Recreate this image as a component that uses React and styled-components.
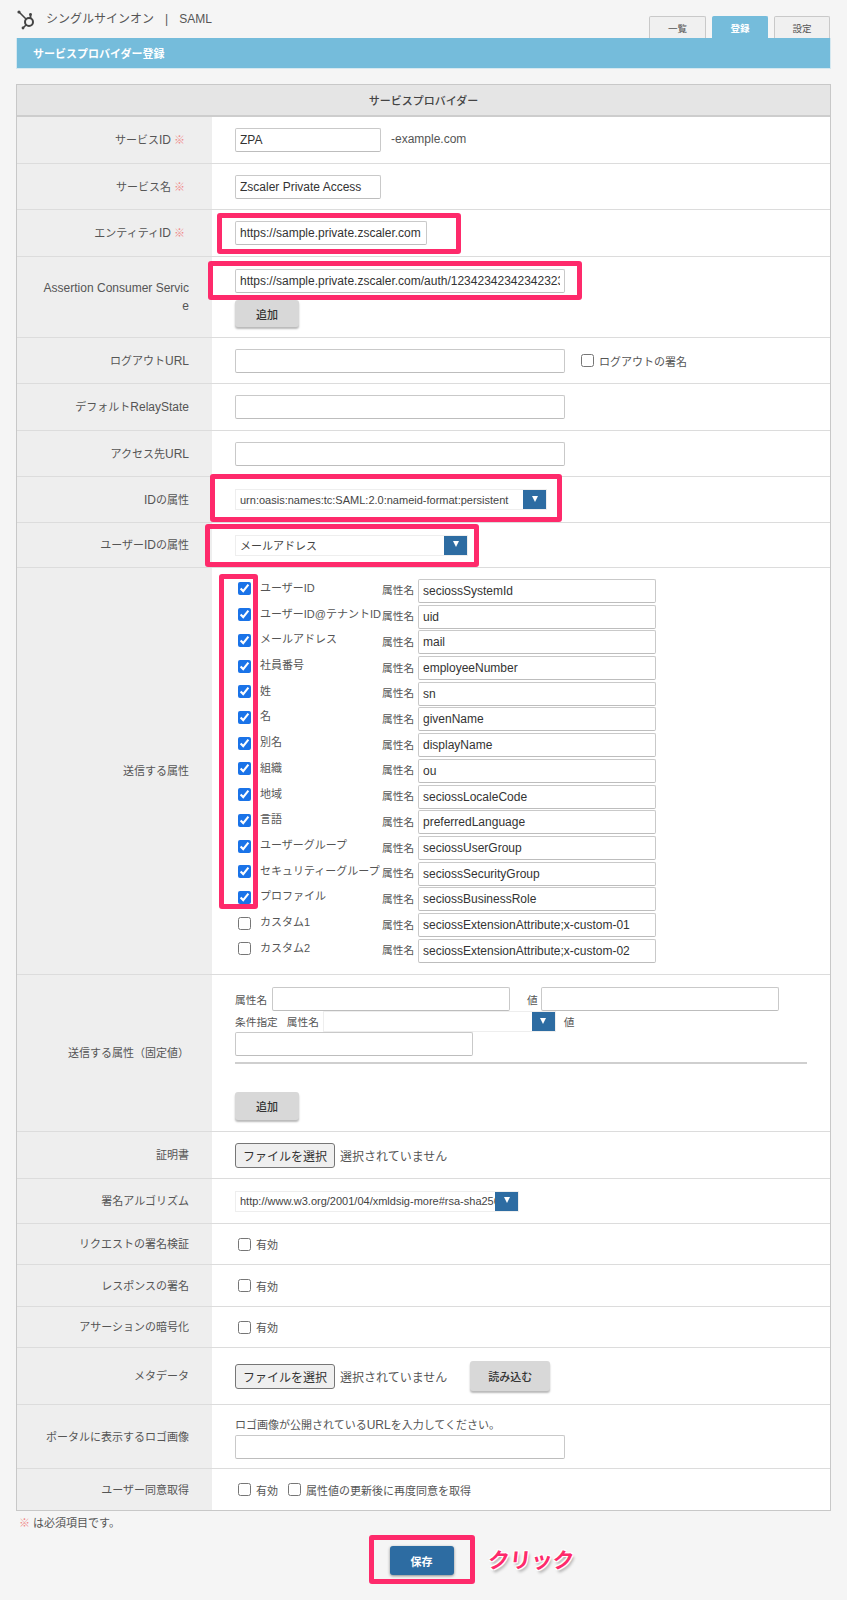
import React from 'react';
import styled, { createGlobalStyle } from 'styled-components';

const FONT = '"Liberation Sans", "Noto Sans CJK JP", sans-serif';

const Global = createGlobalStyle`
  html, body { margin: 0; padding: 0; background: #f5f5f5; }
  body { font-family: ${FONT}; color: #555; font-size: 11px; }
  * { box-sizing: border-box; }
`;

const Page = styled.div`
  position: relative;
  width: 847px;
  height: 1600px;
  padding: 0 16px;
  overflow: hidden;
`;
const TopBar = styled.header`
  height: 38px;
  display: flex;
  justify-content: space-between;
`;
const Title = styled.div`
  display: flex;
  align-items: center;
  height: 37px;
`;
const TitleText = styled.span`
  margin-left: 8px;
  font-size: 12px;
  color: #555;
  white-space: nowrap;
  position: relative;
  top: -1px;
`;
const TitleSep = styled.span`
  margin: 0 11px;
`;
const Tabs = styled.nav`
  display: flex;
  align-items: flex-end;
  gap: 6px;
  margin-right: 1px;
`;
const Tab = styled.div`
  width: ${p => p.$w}px;
  height: 22px;
  display: flex;
  align-items: center;
  justify-content: center;
  font-size: 9.5px;
  border-radius: 2px 2px 0 0;
  background: ${p => (p.$active ? '#75bcdb' : '#f0f0f0')};
  color: ${p => (p.$active ? '#fff' : '#555')};
  font-weight: ${p => (p.$active ? 700 : 400)};
  border: 1px solid ${p => (p.$active ? '#75bcdb' : '#c9c9c9')};
  border-bottom: none;
`;
const TitleBar = styled.div`
  height: 31px;
  background: #75bcdb;
  border: 1px solid #d5e8f0;
  border-top: none;
  color: #fff;
  font-weight: 700;
  font-size: 11px;
  display: flex;
  align-items: center;
  padding-left: 16px;
`;
const Table = styled.section`
  margin-top: 15px;
  border: 1px solid #c8c8c8;
  background: #fff;
`;
const TableHead = styled.div`
  height: 32px;
  background: #e5e5e5;
  border-bottom: 2px solid #cdcdcd;
  display: flex;
  align-items: center;
  justify-content: center;
  font-size: 11px;
  font-weight: 500;
  color: #444;
`;
const Row = styled.div`
  display: grid;
  grid-template-columns: 195px 1fr;
  height: ${p => p.$h}px;
  border-bottom: ${p => (p.$last ? 'none' : '1px solid #dcdcdc')};
`;
const Label = styled.div`
  background: #eee;
  display: flex;
  align-items: center;
  justify-content: flex-end;
  padding: 0 23px 0 22px;
  font-size: 11px;
  color: #555;
  text-align: right;
  word-break: break-all;
  line-height: 18px;
`;
const Latin = styled.span`
  font-size: 12px;
`;
const Req = styled.span`
  color: #f08a8a;
  margin: 0 4px 0 3px;
`;
const Cell = styled.div`
  padding-left: 23px;
  display: flex;
  align-items: center;
  min-width: 0;
`;
const StackCell = styled.div`
  padding: ${p => p.$top}px 0 0 23px;
  display: flex;
  flex-direction: column;
  align-items: flex-start;
`;
const Input = styled.input`
  width: ${p => p.$w || 330}px;
  height: 24px;
  border: 1px solid #c9c9c9;
  border-bottom-color: #bdbdbd;
  border-radius: 2px;
  background: #fff;
  padding: 0 4px;
  font-family: ${FONT};
  font-size: 12px;
  color: #333;
  outline: none;
  flex: none;
`;
const Suffix = styled.span`
  margin-left: 10px;
  font-size: 12px;
  color: #555;
  position: relative;
  top: -1px;
`;
const GrayButton = styled.button`
  width: ${p => p.$w || 64}px;
  height: ${p => p.$ht || 27}px;
  margin-top: ${p => p.$mt || 0}px;
  margin-left: ${p => p.$ml || 0}px;
  border: none;
  border-radius: 3px;
  background: #d8d8d8;
  box-shadow: 0 2px 2px rgba(0, 0, 0, 0.28);
  font-family: ${FONT};
  font-size: 11px;
  font-weight: 500;
  color: #333;
  padding: 0;
  flex: none;
`;
const Check = styled.input.attrs({ type: 'checkbox' })`
  width: 13px;
  height: 13px;
  margin: 0 0 0 ${p => p.$ml ?? 3}px;
  flex: none;
  accent-color: #1a73e8;
`;
const CheckText = styled.span`
  margin-left: 5px;
  font-size: 11px;
  color: #555;
  white-space: nowrap;
`;
const SelectBox = styled.div`
  width: ${p => p.$w}px;
  height: 21px;
  position: relative;
  display: flex;
  align-items: center;
  background: #fff;
  border: 1px solid #eeeeee;
  padding: 0 24px 0 4px;
  overflow: hidden;
  white-space: nowrap;
  font-size: 11px;
  color: #444;
  flex: none;
`;
const SelectArrow = styled.span`
  position: absolute;
  right: 0;
  top: 0;
  bottom: 0;
  width: 23px;
  background: #2d6ca2;
  display: flex;
  align-items: center;
  justify-content: center;
  &::after {
    content: '';
    border-left: 3.75px solid transparent;
    border-right: 3.75px solid transparent;
    border-top: 6.5px solid #fff;
    margin-top: -2px;
  }
`;
const AttrList = styled.div`
  display: flex;
  flex-direction: column;
`;
const AttrRow = styled.div`
  height: 25.72px;
  display: flex;
  align-items: center;
`;
const AttrCheck = styled(Check)`
  margin: -4px 0 0 3px;
`;
const AttrName = styled.span`
  width: 122px;
  margin-left: 9px;
  font-size: 11px;
  color: #555;
  white-space: nowrap;
  position: relative;
  top: -4px;
`;
const AttrKey = styled.span`
  width: 36px;
  font-size: 10.7px;
  color: #555;
  position: relative;
  top: -1px;
`;
const FixedLine = styled.div`
  display: flex;
  align-items: center;
  height: ${p => p.$h}px;
`;
const FixedText = styled.span`
  font-size: 10.7px;
  color: #555;
  margin-left: ${p => p.$ml || 0}px;
  margin-right: ${p => p.$mr || 0}px;
  white-space: nowrap;
`;
const Rule = styled.div`
  width: 572px;
  height: 2px;
  margin-top: 6px;
  background: #cfcfcf;
`;
const FileButton = styled.button`
  width: 100px;
  height: 25px;
  background: #efefef;
  border: 1px solid #767676;
  border-radius: 3px;
  font-family: ${FONT};
  font-size: 12px;
  color: #333;
  padding: 0;
  flex: none;
`;
const FileText = styled.span`
  margin-left: 5px;
  font-size: 12px;
  color: #555;
  white-space: nowrap;
`;
const Hint = styled.div`
  font-size: 11px;
  color: #555;
  margin-bottom: 2px;
  line-height: 16px;
`;
const Note = styled.div`
  margin-top: 5px;
  padding-left: 3px;
  font-size: 11px;
  line-height: 14px;
  color: #555;
`;
const NoteMark = styled.span`
  color: #f08a8a;
  margin-right: 3px;
`;
const SaveWrap = styled.div`
  display: flex;
  justify-content: center;
  margin-top: 16px;
`;
const SaveButton = styled.button`
  width: 64px;
  height: 29px;
  border: none;
  border-radius: 3px;
  background: #2d6ca2;
  color: #fff;
  font-family: ${FONT};
  font-size: 11px;
  font-weight: 700;
  box-shadow: 0 1px 3px rgba(0, 0, 0, 0.45);
  padding: 0;
  margin-left: -4px;
`;
const Mark = styled.div`
  position: absolute;
  left: ${p => p.$x}px;
  top: ${p => p.$y}px;
  width: ${p => p.$w}px;
  height: ${p => p.$h}px;
  border: 5px solid #fe2a6b;
  border-radius: 3px;
  pointer-events: none;
`;
const ClickText = styled.div`
  position: absolute;
  left: 488px;
  top: 1546px;
  font-size: 21.5px;
  line-height: 30px;
  font-weight: 700;
  color: #fe2a6b;
  transform: skewX(-6deg);
  text-shadow: 1px 1px 0 #fff, -1px -1px 0 #fff, 1px -1px 0 #fff, -1px 1px 0 #fff, 2px 3px 3px rgba(0, 0, 0, 0.3);
`;

const Logo = () => (
  <svg width="22" height="24" viewBox="0 0 22 24" fill="none" stroke="#444" strokeLinecap="round">
    <circle cx="13" cy="15" r="4" strokeWidth="2" />
    <path d="M3.5 5.5 L10 12" strokeWidth="1.6" />
    <path d="M14.5 8 V11" strokeWidth="1.8" />
    <path d="M7.5 20.5 L10 18" strokeWidth="1.6" />
    <circle cx="3" cy="5" r="1.6" fill="#444" stroke="none" />
    <circle cx="14.5" cy="7.5" r="1.4" fill="#444" stroke="none" />
    <circle cx="7" cy="21" r="1.4" fill="#444" stroke="none" />
  </svg>
);

const attrs = [
  ['ユーザーID', 'seciossSystemId', true],
  ['ユーザーID@テナントID', 'uid', true],
  ['メールアドレス', 'mail', true],
  ['社員番号', 'employeeNumber', true],
  ['姓', 'sn', true],
  ['名', 'givenName', true],
  ['別名', 'displayName', true],
  ['組織', 'ou', true],
  ['地域', 'seciossLocaleCode', true],
  ['言語', 'preferredLanguage', true],
  ['ユーザーグループ', 'seciossUserGroup', true],
  ['セキュリティーグループ', 'seciossSecurityGroup', true],
  ['プロファイル', 'seciossBusinessRole', true],
  ['カスタム1', 'seciossExtensionAttribute;x-custom-01', false],
  ['カスタム2', 'seciossExtensionAttribute;x-custom-02', false],
];

const marks = [
  [217, 213, 244, 41],
  [208, 261, 374, 39],
  [210, 474, 352, 48],
  [205, 524, 274, 43],
  [219, 574, 39, 335],
  [369, 1535, 106, 49],
];

const Mixed = ({ text }) =>
  text.split(/([A-Za-z ]+)/).map((part, i) =>
    i % 2 ? <Latin key={i}>{part}</Latin> : part
  );

const Field = ({ label, req, h, last, children }) => (
  <Row $h={h} $last={last}>
    <Label>
      <span>
        <Mixed text={label} />
        {req && <Req>※</Req>}
      </span>
    </Label>
    {children}
  </Row>
);

export default function App() {
  return (
    <Page>
      <Global />
      <TopBar>
        <Title>
          <Logo />
          <TitleText>シングルサインオン<TitleSep>|</TitleSep>SAML</TitleText>
        </Title>
        <Tabs>
          <Tab $w={57}>一覧</Tab>
          <Tab $w={56} $active>登録</Tab>
          <Tab $w={56}>設定</Tab>
        </Tabs>
      </TopBar>
      <TitleBar>サービスプロバイダー登録</TitleBar>
      <Table>
        <TableHead>サービスプロバイダー</TableHead>
        <Field label="サービスID" req h={47}>
          <Cell>
            <Input $w={146} defaultValue="ZPA" />
            <Suffix>-example.com</Suffix>
          </Cell>
        </Field>
        <Field label="サービス名" req h={46}>
          <Cell><Input $w={146} defaultValue="Zscaler Private Access" /></Cell>
        </Field>
        <Field label="エンティティID" req h={47}>
          <Cell><Input $w={192} defaultValue="https://sample.private.zscaler.com" /></Cell>
        </Field>
        <Field label="Assertion Consumer Service" h={81}>
          <StackCell $top={12}>
            <Input defaultValue="https://sample.private.zscaler.com/auth/12342342342342323" />
            <GrayButton $mt={7}>追加</GrayButton>
          </StackCell>
        </Field>
        <Field label="ログアウトURL" h={46}>
          <Cell>
            <Input />
            <Check $ml={16} />
            <CheckText>ログアウトの署名</CheckText>
          </Cell>
        </Field>
        <Field label="デフォルトRelayState" h={47}>
          <Cell><Input /></Cell>
        </Field>
        <Field label="アクセス先URL" h={46}>
          <Cell><Input /></Cell>
        </Field>
        <Field label="IDの属性" h={46}>
          <Cell>
            <SelectBox $w={312}>urn:oasis:names:tc:SAML:2.0:nameid-format:persistent<SelectArrow /></SelectBox>
          </Cell>
        </Field>
        <Field label="ユーザーIDの属性" h={45}>
          <Cell>
            <SelectBox $w={233}>メールアドレス<SelectArrow /></SelectBox>
          </Cell>
        </Field>
        <Field label="送信する属性" h={407}>
          <StackCell $top={10}>
            <AttrList>
              {attrs.map(([name, value, on]) => (
                <AttrRow key={name}>
                  <AttrCheck defaultChecked={on} />
                  <AttrName>{name}</AttrName>
                  <AttrKey>属性名</AttrKey>
                  <Input $w={238} defaultValue={value} />
                </AttrRow>
              ))}
            </AttrList>
          </StackCell>
        </Field>
        <Field label="送信する属性（固定値）" h={157}>
          <StackCell $top={12}>
            <FixedLine $h={24}>
              <FixedText $mr={5}>属性名</FixedText>
              <Input $w={238} />
              <FixedText $ml={17} $mr={3}>値</FixedText>
              <Input $w={238} />
            </FixedLine>
            <FixedLine $h={21}>
              <FixedText>条件指定</FixedText>
              <FixedText $ml={9} $mr={4}>属性名</FixedText>
              <SelectBox $w={233}><SelectArrow /></SelectBox>
              <FixedText $ml={8}>値</FixedText>
            </FixedLine>
            <Input $w={238} />
            <Rule />
            <GrayButton $mt={28} $ht={28}>追加</GrayButton>
          </StackCell>
        </Field>
        <Field label="証明書" h={47}>
          <Cell>
            <FileButton>ファイルを選択</FileButton>
            <FileText>選択されていません</FileText>
          </Cell>
        </Field>
        <Field label="署名アルゴリズム" h={45}>
          <Cell>
            <SelectBox $w={284}>http://www.w3.org/2001/04/xmldsig-more#rsa-sha256<SelectArrow /></SelectBox>
          </Cell>
        </Field>
        <Field label="リクエストの署名検証" h={41}>
          <Cell><Check /><CheckText>有効</CheckText></Cell>
        </Field>
        <Field label="レスポンスの署名" h={42}>
          <Cell><Check /><CheckText>有効</CheckText></Cell>
        </Field>
        <Field label="アサーションの暗号化" h={41}>
          <Cell><Check /><CheckText>有効</CheckText></Cell>
        </Field>
        <Field label="メタデータ" h={57}>
          <Cell>
            <FileButton>ファイルを選択</FileButton>
            <FileText>選択されていません</FileText>
            <GrayButton $w={80} $ht={30} $ml={23}>読み込む</GrayButton>
          </Cell>
        </Field>
        <Field label="ポータルに表示するロゴ画像" h={64}>
          <StackCell $top={12}>
            <Hint><Mixed text="ロゴ画像が公開されているURLを入力してください。" /></Hint>
            <Input />
          </StackCell>
        </Field>
        <Field label="ユーザー同意取得" h={41} last>
          <Cell>
            <Check /><CheckText>有効</CheckText>
            <Check $ml={10} /><CheckText>属性値の更新後に再度同意を取得</CheckText>
          </Cell>
        </Field>
      </Table>
      <Note><NoteMark>※</NoteMark>は必須項目です。</Note>
      <SaveWrap><SaveButton>保存</SaveButton></SaveWrap>
      {marks.map(([x, y, w, h]) => (
        <Mark key={`${x}-${y}`} $x={x} $y={y} $w={w} $h={h} />
      ))}
      <ClickText>クリック</ClickText>
    </Page>
  );
}
